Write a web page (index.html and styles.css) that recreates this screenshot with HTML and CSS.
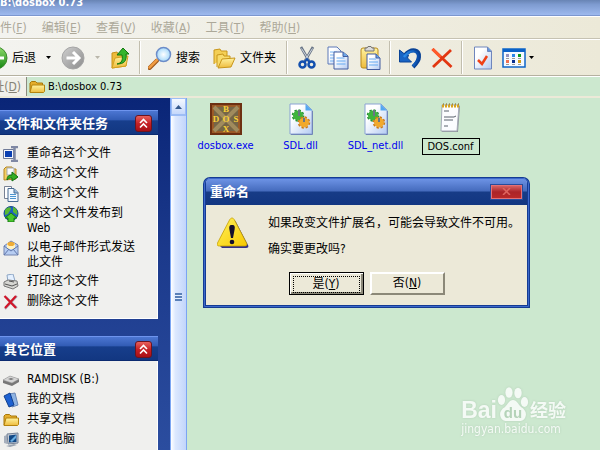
FILE: index.html
```
<!DOCTYPE html>
<html lang="zh-CN">
<head>
    <meta charset="UTF-8">
    <meta name="viewport" content="width=device-width, initial-scale=1.0">
    <title>B:\dosbox 0.73</title>
    <link rel="stylesheet" href="styles.css">
</head>
<body>
    <!-- shared symbols -->
    <svg class="defs" aria-hidden="true">
        <defs>
            <linearGradient id="gGreen" x1="0" y1="0" x2="0" y2="1"><stop offset="0" stop-color="#8fdc6c"/><stop offset="1" stop-color="#128410"/></linearGradient>
            <linearGradient id="gGrey" x1="0" y1="0" x2="1" y2="1"><stop offset="0" stop-color="#cfcfcf"/><stop offset="1" stop-color="#8c8c8c"/></linearGradient>
            <linearGradient id="gFolder" x1="0" y1="0" x2="0" y2="1"><stop offset="0" stop-color="#fff3a0"/><stop offset="1" stop-color="#eebb3c"/></linearGradient>
            <linearGradient id="gPage" x1="0" y1="0" x2="1" y2="1"><stop offset="0.3" stop-color="#fff"/><stop offset="1" stop-color="#b4cbf2"/></linearGradient>
            <linearGradient id="gWarn" x1="0" y1="0" x2="1" y2="1"><stop offset="0" stop-color="#fff25c"/><stop offset="1" stop-color="#f8c800"/></linearGradient>
            <linearGradient id="gUndo" x1="0" y1="0" x2="1" y2="0"><stop offset="0" stop-color="#2b8cea"/><stop offset="1" stop-color="#0a4ca8"/></linearGradient>
            <radialGradient id="gLens"><stop offset="0" stop-color="#fff"/><stop offset="1" stop-color="#a5d9fa"/></radialGradient>
        </defs>
        <symbol id="folder" viewBox="0 0 16 16">
            <path d="M1 13V4l1.500-1.500h4L8 4h5.500v2" fill="#e5ad2c" stroke="#a87808"/>
            <path d="M1 13.500L3 6h12.500v6.500l-1 1z" fill="url(#gFolder)" stroke="#b5830d"/>
        </symbol>
        <symbol id="chevrons" viewBox="0 0 17 17">
            <path d="M5 8l3.500-3.500L12 8M5 12.500L8.500 9l3.500 3.500" fill="none" stroke="#fff" stroke-width="1.600"/>
        </symbol>
        <symbol id="dll" viewBox="0 0 32 32">
            <path d="M5 1h16l6 6v24H5z" fill="url(#gPage)" stroke="#8ba3d4"/>
            <path d="M20.500 1l6.500 6.500h-6.500z" fill="#54a7ef"/>
            <path d="M27.500 8v23.500H6" fill="none" stroke="#7185b8"/>
            <circle cx="13" cy="12.500" r="5" fill="#3eb43c"/>
            <circle cx="13" cy="12.500" r="5.500" fill="none" stroke="#259431" stroke-width="1.500" stroke-dasharray="2.400 1.900"/>
            <circle cx="19" cy="19.500" r="5" fill="#f1a92d"/>
            <circle cx="19" cy="19.500" r="5.500" fill="none" stroke="#cd7b15" stroke-width="1.500" stroke-dasharray="2.400 1.900"/>
            <path d="M14 7v6M19 15v4" stroke="#687585" stroke-width="2"/>
        </symbol>
    </svg>

    <div class="window">
        <header class="titlebar">B:\dosbox 0.73</header>

        <nav class="menubar">
            <button class="menu-item" disabled>件(<u>F</u>)</button>
            <button class="menu-item" disabled>编辑(<u>E</u>)</button>
            <button class="menu-item" disabled>查看(<u>V</u>)</button>
            <button class="menu-item" disabled>收藏(<u>A</u>)</button>
            <button class="menu-item" disabled>工具(<u>T</u>)</button>
            <button class="menu-item" disabled>帮助(<u>H</u>)</button>
        </nav>

        <div class="toolbar">
            <div class="tool-group nav-group">
                <button class="tool">
                    <svg width="8" height="24" viewBox="15 0 8 24"><circle cx="11" cy="12" r="11" fill="url(#gGreen)" stroke="#3b8a2c"/><path d="M6 12h13" stroke="#fff" stroke-width="3"/></svg>
                    后退
                </button>
                <button class="drop" aria-label="后退历史"></button>
                <button class="tool" aria-label="前进" disabled>
                    <svg width="24" height="24" viewBox="0 0 24 24"><circle cx="12" cy="12" r="11" fill="url(#gGrey)" stroke="#a5a5a5"/><path d="M5.500 12h12M12 6l6 6-6 6" fill="none" stroke="#fff" stroke-width="3"/></svg>
                </button>
                <button class="drop" aria-label="前进历史" disabled></button>
                <button class="tool" aria-label="向上">
                    <svg width="20" height="24" viewBox="0 0 20 24"><path d="M2 22V7l5-1 1 2 8-1v13z" fill="#edba3b" stroke="#c8921a"/><path d="M2 22l3-10 13-2-2 10z" fill="url(#gFolder)" stroke="#d5a11f"/><path d="M7 18c5-1 6-4 5-9H7l6-7 6 6h-3c1 7-2 10-9 10z" fill="#35b52d" stroke="#13780f"/></svg>
                </button>
            </div>
            <div class="tool-group find-group">
                <button class="tool">
                    <svg width="24" height="24" viewBox="0 0 24 24"><path d="M1.500 22L9 14.500" stroke="#9a5418" stroke-width="4" stroke-linecap="round"/><path d="M1.500 21.500L9 14" stroke="#ef9b41" stroke-width="2.500" stroke-linecap="round"/><circle cx="15.500" cy="8.500" r="7" fill="url(#gLens)" stroke="#6c8cc8" stroke-width="1.500"/></svg>
                    搜索
                </button>
                <button class="tool">
                    <svg width="24" height="24" viewBox="0 0 24 24"><path d="M2 18V4l6-1 1 2h6v6" fill="#f4cf55" stroke="#c8961b"/><path d="M5 21V9l6-1 1 2h6v4" fill="#f8dc6b" stroke="#c8961b"/><path d="M6 22l4-9 13-1-4 9z" fill="url(#gFolder)" stroke="#c8961b"/></svg>
                    文件夹
                </button>
            </div>
            <div class="tool-group edit-group">
                <button class="tool" aria-label="剪切">
                    <svg width="20" height="24" viewBox="0 0 20 24"><path d="M4 1l8 14M16 1L8 15" stroke="#687486" stroke-width="2.600"/><path d="M4.500 2.500l7 11M15.500 2.500l-7 11" stroke="#d2d9e1" stroke-width="1"/><circle cx="5.500" cy="18.500" r="3" fill="none" stroke="#1450ae" stroke-width="2.500"/><circle cx="14.500" cy="18.500" r="3" fill="none" stroke="#1450ae" stroke-width="2.500"/><path d="M7.500 16l2.500-3 2.500 3" fill="none" stroke="#1450ae" stroke-width="2"/></svg>
                </button>
                <button class="tool" aria-label="复制">
                    <svg width="24" height="24" viewBox="0 0 24 24"><path d="M2 1h9l4 4v13H2z" fill="url(#gPage)" stroke="#5c79b8"/><path d="M4 6h7M4 9h8M4 12h8M4 15h8" stroke="#75b2f2"/><path d="M8 6h9l5 4v13H8z" fill="url(#gPage)" stroke="#435d9f"/><path d="M17 6v4.500h5" fill="#6aa7e8" stroke="#435d9f"/><path d="M10.500 12h8M10.500 15h9M10.500 18h9" stroke="#64aaf2"/></svg>
                </button>
                <button class="tool" aria-label="粘贴">
                    <svg width="24" height="24" viewBox="0 0 24 24"><rect x="2" y="2" width="17" height="20" rx="2" fill="url(#gFolder)" stroke="#b98a1b"/><path d="M6 5V2h2l1-1.500h3L13 2h2v3z" fill="#dadada" stroke="#747474"/><path d="M8 8h9l4 4v11.500H8z" fill="url(#gPage)" stroke="#435d9f"/><path d="M17 8v4h4" fill="#6aa7e8" stroke="#435d9f"/><path d="M10 13h7M10 16h9M10 19h9" stroke="#64aaf2"/></svg>
                </button>
            </div>
            <div class="tool-group undo-group">
                <button class="tool" aria-label="撤消">
                    <svg width="24" height="24" viewBox="0 0 24 24"><path d="M7 9c7-8 15-5 14 2 0 4-3 7-6 10" fill="none" stroke="#0a4396" stroke-width="4"/><path d="M1.500 4v12h12l-4-4 1-3-4-1z" fill="#1964c4" stroke="#0a4396"/><path d="M6 11c7-9 15-6 14 0 0 4-2 6-5 9" fill="none" stroke="url(#gUndo)" stroke-width="2.500"/></svg>
                </button>
                <button class="tool" aria-label="删除">
                    <svg width="24" height="24" viewBox="0 0 24 24"><path d="M2.500 3l19 18M21 4L3 21" stroke="#e23610" stroke-width="2.800"/><path d="M2.500 3l8 8" stroke="#ff5b2c" stroke-width="3"/></svg>
                </button>
            </div>
            <div class="tool-group view-group">
                <button class="tool" aria-label="属性">
                    <svg width="20" height="24" viewBox="0 0 20 24"><path d="M1.500 1h13l4 4v18h-17z" fill="url(#gPage)" stroke="#6f86bd"/><path d="M14.500 1v4.500h4" fill="#5d95dd" stroke="#6f86bd"/><path d="M5 14l4 4 5-8" fill="none" stroke="#ef4116" stroke-width="2.500"/></svg>
                </button>
                <button class="tool views" aria-label="查看">
                    <svg width="24" height="20" viewBox="0 0 24 20"><rect x="1" y="1" width="22" height="18" fill="#f5faff" stroke="#0c65c9" stroke-width="1.500"/><path d="M1 2.500h22" stroke="#0a62c8" stroke-width="3"/><path d="M4 6h3v3H4z" fill="#9292bf"/><path d="M10 6h3v3h-3z" fill="#2a86e8"/><path d="M16 6h3v3h-3z" fill="#0b9a1c"/><path d="M4 12h3v3H4z" fill="#ef7152"/><path d="M10 12h3v3h-3z" fill="#09308f"/><path d="M16 12h3v3h-3z" fill="#cf9b16"/><path d="M4 10.500h3m3 0h3m3 0h3M4 16.500h3m3 0h3m3 0h3" stroke="#999"/></svg>
                </button>
                <button class="drop" aria-label="查看方式"></button>
            </div>
        </div>

        <div class="addressbar">
            <label class="address-label" for="address">址(<u>D</u>)</label>
            <div class="address-box">
                <svg width="16" height="16"><use href="#folder"/></svg>
                <input id="address" class="address-input" type="text" value="B:\dosbox 0.73">
            </div>
        </div>

        <div class="content">
            <aside class="sidebar">
                <section class="panel">
                    <div class="panel-head">
                        <h2>文件和文件夹任务</h2>
                        <button class="collapse" aria-label="折叠文件和文件夹任务"><svg width="17" height="17"><use href="#chevrons"/></svg></button>
                    </div>
                    <ul class="panel-list">
                        <li><svg width="16" height="16" viewBox="0 0 16 16"><path d="M.5 3.500h10v9H.5z" fill="#f4f6fc" stroke="#707b98"/><path d="M2 5h7v6H2z" fill="#0b40b2"/><path d="M8 1h7M8 15h7M11.500 1v14" stroke="#7f88a4" stroke-width="2.500"/></svg><a href="#">重命名这个文件</a></li>
                        <li><svg width="16" height="16" viewBox="0 0 16 16"><path d="M1 14V3l2-2h6l1 2h3v10z" fill="#f4cf62" stroke="#b48622"/><path d="M4 2h7v7H4z" fill="#f8fafc" stroke="#a5a9b0"/><path d="M4 14c0-4 2-5 5-5V6l6 5-6 4v-3c-2 0-3 0-5 2z" fill="#36ae24" stroke="#107012"/></svg><a href="#">移动这个文件</a></li>
                        <li><svg width="16" height="16" viewBox="0 0 16 16"><path d="M1.500.5h7v12h-7z" fill="#fff" stroke="#778093"/><path d="M5 2.500h6l4 4v9H5z" fill="#f3f9ff" stroke="#486a91"/><path d="M11 3v4h4" fill="#92bce3" stroke="#486a91"/><path d="M7 8.500h6M7 10.500h6M7 12.500h6" stroke="#4c95cf"/></svg><a href="#">复制这个文件</a></li>
                        <li><svg width="16" height="16" viewBox="0 0 16 16"><circle cx="8" cy="7.500" r="7" fill="#1d61be" stroke="#164a8b"/><path d="M2 4c3-4 6-3 6-1L5 8 2 9zM10 1c4 1 5 5 4 8l-4-3z" fill="#58b833"/><path d="M8 7l6 5h-3v4H5v-4H2z" fill="#4ac82d" stroke="#187a15"/></svg><a href="#">将这个文件发布到<br>Web</a></li>
                        <li><svg width="16" height="16" viewBox="0 0 16 16"><path d="M1 6l7-5 7 4v10H1z" fill="#b7cdf2" stroke="#7384b0"/><path d="M4 3h8v6H4z" fill="#fff2c2"/><path d="M4 4c2-3 6-3 8 0l-2 2H6z" fill="#efac36"/><path d="M1 6l7 5 7-5M1 15l5-6M15 15l-5-6" fill="none" stroke="#6077ab"/></svg><a href="#">以电子邮件形式发送<br>此文件</a></li>
                        <li><svg width="16" height="16" viewBox="0 0 16 16"><path d="M4 1l6-1 2 7-7 1z" fill="#e4f0ff" stroke="#8da6c5"/><path d="M1 8l4-2 9 1 1 5-5 3-9-3z" fill="#d6d6d2" stroke="#777"/><path d="M2 10l7 2 5-2M6 7l5 1" fill="none" stroke="#555"/></svg><a href="#">打印这个文件</a></li>
                        <li><svg width="16" height="16" viewBox="0 0 16 16"><path d="M3 3l11 11M14 2L2 15" stroke="#aab" stroke-width="2"/><path d="M1.500 2l11.500 12M13 2L2 14" stroke="#d11629" stroke-width="2.200"/></svg><a href="#">删除这个文件</a></li>
                    </ul>
                </section>

                <section class="panel">
                    <div class="panel-head">
                        <h2>其它位置</h2>
                        <button class="collapse" aria-label="折叠其它位置"><svg width="17" height="17"><use href="#chevrons"/></svg></button>
                    </div>
                    <ul class="panel-list">
                        <li><svg width="16" height="16" viewBox="0 0 16 16"><path d="M0 8l7-4 9 3v3l-7 4-9-3z" fill="#777"/><path d="M0 8l7-4 9 3-7 4z" fill="#d5d5d5" stroke="#999" stroke-width=".5"/><path d="M5 7l3-1 3 1-3 1z" fill="#777"/></svg><a href="#">RAMDISK (B:)</a></li>
                        <li><svg width="16" height="16" viewBox="0 0 16 16"><path d="M6 2l6-1 3 12-6 2z" fill="#8eb3e2" stroke="#6986b5"/><path d="M1 4l6-3 4 12-5 2z" fill="#1d61d1" stroke="#12408d"/></svg><a href="#">我的文档</a></li>
                        <li><svg width="16" height="16"><use href="#folder"/></svg><a href="#">共享文档</a></li>
                        <li><svg width="16" height="16" viewBox="0 0 16 16"><path d="M1 4l3-1v9l-3-1z" fill="#a7b0bd"/><path d="M4 2l11-1v10L5 12z" fill="#c3cad4" stroke="#758296"/><path d="M6 3.500l7.500-1v7.500L6 10.500z" fill="#124986"/><path d="M7 9l6-6v3L9 10z" fill="#68aee2"/><path d="M3 14l8-2 3 1-7 2z" fill="#99a3b0"/></svg><a href="#">我的电脑</a></li>
                    </ul>
                </section>
            </aside>

            <div class="scrollbar" aria-hidden="true">
                <div class="scroll-up"><svg width="7" height="4" viewBox="0 0 7 4"><path d="M0 4l3.500-4L7 4z" fill="#35598c"/></svg></div>
                <div class="scroll-thumb"><span class="grip"></span></div>
            </div>

            <main class="files">
                <figure class="file">
                    <svg width="32" height="32" viewBox="0 0 32 32"><path d="M0 0h32v32H0z" fill="#6d3012"/><path d="M2 2h28v28H2z" fill="#9b5a28"/><path d="M4 4h24v24H4z" fill="#756647"/><path d="M4 4l24 24M28 4L4 28" stroke="#a08b5d" stroke-width="4"/><g class="dos-text"><text x="16" y="9">B</text><text x="6" y="19">D</text><text x="16" y="19">O</text><text x="26" y="19">S</text><text x="16" y="29">X</text></g></svg>
                    <figcaption>dosbox.exe</figcaption>
                </figure>
                <figure class="file">
                    <svg width="32" height="32"><use href="#dll"/></svg>
                    <figcaption>SDL.dll</figcaption>
                </figure>
                <figure class="file">
                    <svg width="32" height="32"><use href="#dll"/></svg>
                    <figcaption>SDL_net.dll</figcaption>
                </figure>
                <figure class="file">
                    <svg width="32" height="32" viewBox="0 0 32 32"><path d="M8 3h17l-2 26H7z" fill="#8d9299"/><path d="M7 2h17l-2 26H6z" fill="#fbfcff" stroke="#a5abb8"/><path d="M7 3h17" stroke="#d7a51f" stroke-width="3" stroke-dasharray="2 1"/><path d="M8 1h16" stroke="#756027" stroke-dasharray="1 2"/><path d="M9 8h5M9 14h10l2-1M9 17h9M9 23h4" fill="none" stroke="#59616c" stroke-width="1"/></svg>
                    <input class="rename" type="text" value="DOS.conf" aria-label="文件名">
                </figure>
            </main>
        </div>
    </div>

    <div class="dialog" role="dialog" aria-labelledby="dialog-title">
        <div class="dialog-title">
            <span id="dialog-title">重命名</span>
            <button class="close" aria-label="关闭" disabled><svg width="9" height="7" viewBox="0 0 9 7"><path d="M1 0l7 7M8 0L1 7" stroke="#df6660" stroke-width="1.500"/></svg></button>
        </div>
        <div class="dialog-body">
            <div class="message">
                <svg width="32" height="32" viewBox="0 0 32 32"><path d="M16.500 3c1 0 2 1 2.500 2l12 23c1 2 0 3-2 3H5l-2-2z" fill="#33308a"/><path d="M15 1c1 0 2 1 2.500 2l12 23c1 2 0 3-2 3H2.500c-2 0-3-1-2-3l12-23C13 2 14 1 15 1z" fill="url(#gWarn)" stroke="#c5a000" stroke-width=".8"/><path d="M15 8c3 0 3 2 2.500 5L16 21h-2l-1.500-8C12 10 12 8 15 8z" fill="#16102c"/><circle cx="15" cy="25" r="2.300" fill="#16102c"/></svg>
                <div class="message-text">
                    <p>如果改变文件扩展名，可能会导致文件不可用。</p>
                    <p>确实要更改吗?</p>
                </div>
            </div>
            <div class="dialog-buttons">
                <button class="btn btn-default"><span>是(<u>Y</u>)</span></button>
                <button class="btn"><span>否(<u>N</u>)</span></button>
            </div>
        </div>
    </div>

    <div class="watermark">
        <div class="brand">
            <span class="brand-bai">Bai</span>
            <svg width="32" height="36" viewBox="0 0 32 36"><g fill="#f4faf5"><ellipse cx="4.500" cy="14" rx="3.600" ry="5"/><ellipse cx="12" cy="6.500" rx="3.600" ry="5.200"/><ellipse cx="21" cy="7" rx="3.700" ry="5.200"/><ellipse cx="27.500" cy="16" rx="3.600" ry="5"/><path d="M16 14c4 0 5 4 8 7 5 3 6 7 4 11-2 4-6 3-12 3s-10 1-12-3c-2-4-1-8 4-11 3-3 4-7 8-7z"/></g><text class="brand-du" x="16" y="32">du</text></svg>
            <span class="brand-name">经验</span>
        </div>
        <div class="brand-url">jingyan.baidu.com</div>
    </div>
</body>
</html>
```

FILE: styles.css
```
* {
    box-sizing: border-box;
}

body {
    margin: 0;
    height: 100vh;
    overflow: hidden;
    position: relative;
    font-family: "DejaVu Sans Condensed", "Noto Sans CJK SC", sans-serif;
    font-size: 12px;
    line-height: 16px;
    color: #000;
    background: #cce8cf;
}

button {
    font: inherit;
    color: inherit;
    background: none;
    border: none;
    padding: 0;
}

svg {
    display: block;
    flex-shrink: 0;
}

.defs {
    position: absolute;
    width: 0;
    height: 0;
}

.window {
    display: flex;
    flex-direction: column;
    height: 100vh;
}

.titlebar {
    display: flex;
    align-items: flex-end;
    height: 16px;
    padding-bottom: 4px;
    background: linear-gradient(#6884b4, #7e9bd0 30%, #9db9ee);
    border-bottom: 1px solid #7c97cf;
    color: #fff;
    font-weight: bold;
    font-size: 11px;
}

/* menu and toolbar */
.menubar {
    display: flex;
    align-items: center;
    gap: 15px;
    height: 23px;
    background: linear-gradient(to right, #f3f3ef, #ece9d8);
    border-bottom: 1px solid #c6c2b2;
    border-top: 1px solid #fff;
}

.menu-item {
    color: #aca899;
    white-space: nowrap;
}

.toolbar {
    display: flex;
    height: 37px;
    padding: 1px 0;
    background: linear-gradient(to right, #f3f3ef, #ece9d8);
    border-top: 1px solid #fff;
    border-bottom: 1px solid #b5b1a0;
}

.tool-group {
    display: flex;
    align-items: center;
    border-right: 1px solid #c2beae;
    box-shadow: 1px 0 #fff;
}

.tool {
    display: flex;
    align-items: center;
    gap: 4px;
    white-space: nowrap;
}

.drop {
    width: 5px;
    height: 3px;
    background: #000;
    clip-path: polygon(0 0, 100% 0, 50% 100%);
}

.drop:disabled {
    background: #b9b6aa;
}

.nav-group {
    gap: 10px;
    padding-right: 9px;
}

.find-group {
    gap: 12px;
    padding: 0 10px 0 8px;
}

.edit-group {
    gap: 9px;
    padding: 0 6px 0 10px;
}

.undo-group {
    gap: 8px;
    padding: 0 7px 0 8px;
}

.view-group {
    flex: 1;
    gap: 3px;
    padding-left: 11px;
    border: none;
    box-shadow: none;
}

.views {
    margin-left: 6px;
}

.addressbar {
    display: flex;
    align-items: center;
    height: 22px;
    background: #f1f0ea;
    border-top: 1px solid #fff;
    border-bottom: 2px solid #ece9d8;
}

.address-label {
    width: 26px;
    display: flex;
    justify-content: flex-end;
    padding-right: 5px;
    color: #858275;
    white-space: nowrap;
}

.address-box {
    flex: 1;
    display: flex;
    align-items: center;
    gap: 3px;
    align-self: stretch;
    padding: 1px 0 0 2px;
    background: #cce8cf;
    border-left: 1px solid #8c8a7e;
}

.address-input {
    flex: 1;
    font: inherit;
    font-size: 11px;
    padding: 0;
    border: none;
    background: transparent;
}

/* left pane */
.content {
    flex: 1;
    display: flex;
    min-height: 0;
}

.sidebar {
    width: 170px;
    padding: 12px 12px 0 0;
    overflow: hidden;
    background: linear-gradient(#0a2577, #1c3a8c 45%, #2b4d9f);
}

.panel {
    margin-bottom: 17px;
}

.panel-head {
    display: flex;
    align-items: center;
    justify-content: space-between;
    height: 25px;
    padding: 2px 6px 0 4px;
    border-top: 1px solid #6e94ee;
    border-bottom: 1px solid #0b2a70;
    background: linear-gradient(#4c76d2, #315bb4 40%, #173e8c 42%, #123781);
}

.panel-head h2 {
    margin: 0;
    font-size: 13px;
    color: #fff;
}

.collapse {
    border-radius: 3px;
    border: 1px solid #6b1420;
    width: 17px;
    height: 17px;
    display: flex;
    align-items: center;
    justify-content: center;
    background: linear-gradient(#e8605c, #c52126 50%, #a80f16);
}

.panel-list {
    display: flex;
    flex-direction: column;
    gap: 4px;
    margin: 0;
    padding: 11px 0 8px 3px;
    list-style: none;
    background: #f0f0ee;
    border: solid #fff;
    border-width: 0 1px 1px 0;
}

.panel-list li {
    display: flex;
    gap: 8px;
    min-height: 16px;
    line-height: 15px;
}

.panel-list a {
    color: #000;
    text-decoration: none;
}

.scrollbar {
    display: flex;
    flex-direction: column;
    width: 17px;
    border: solid #7ba5f2;
    border-width: 0 1px;
    background: #e9f1fe;
}

.scroll-up {
    display: flex;
    align-items: center;
    justify-content: center;
    height: 17px;
    border: 1px solid #9dbdf5;
    background: linear-gradient(#f5f9ff, #c5d8fb);
}

.scroll-thumb {
    flex: 1;
    display: flex;
    justify-content: center;
    padding-top: 177px;
    background: linear-gradient(to right, #fff, #dce8fe 30%, #c2d5fb);
    border-top: 1px solid #9dbdf5;
}

.grip {
    width: 7px;
    height: 8px;
    background: repeating-linear-gradient(#5a80b8 0 2px, #e5f0ff 2px 3px);
}

/* file icons */
.files {
    flex: 1;
    display: flex;
    align-items: flex-start;
    padding: 5px 0 0 1px;
}

.file {
    display: flex;
    flex-direction: column;
    align-items: center;
    gap: 3px;
    width: 75px;
    margin: 0;
    font-size: 11px;
    color: #0000f0;
}

.rename {
    width: 58px;
    height: 17px;
    padding: 0;
    border: 1px solid #000;
    background: transparent;
    font: inherit;
    color: #000;
    text-align: center;
}

.dos-text {
    font: bold 9px "Liberation Serif", serif;
    fill: #f8cf36;
    text-anchor: middle;
}

/* rename dialog */
.dialog {
    position: absolute;
    left: 203px;
    top: 177px;
    width: 327px;
    border: 3px solid #153b93;
    border-top-width: 1px;
    border-radius: 7px 7px 0 0;
    background: #ece9d8;
    outline: 1px solid #3c69cb;
    outline-offset: -2px;
}

.dialog-title {
    display: flex;
    align-items: center;
    justify-content: space-between;
    height: 27px;
    padding: 0 5px 0 4px;
    border-radius: 5px 5px 0 0;
    background: linear-gradient(#7096e8, #456bbd 48%, #173c87 52%, #123681);
    color: #fff;
    font-weight: bold;
    font-size: 13px;
}

.close {
    display: flex;
    align-items: center;
    justify-content: center;
    width: 31px;
    height: 14px;
    border: 1px solid #e37075;
    outline: 1px solid #284b9a;
    background: linear-gradient(#d46062, #ab2428 50%, #b92929);
}

.dialog-body {
    padding: 10px 11px;
}

.message {
    display: flex;
    gap: 19px;
    align-items: flex-start;
    min-height: 57px;
}

.message > svg {
    margin-top: 2px;
}

.message-text {
    white-space: nowrap;
}

.message-text p {
    margin: 0 0 10px;
}

.dialog-buttons {
    display: flex;
    justify-content: center;
    gap: 6px;
}

.btn {
    width: 75px;
    height: 23px;
    padding: 2px;
    background: #ece9d8;
    border: 2px solid;
    border-color: #fff #8b8878 #8b8878 #fff;
}

.btn span {
    display: block;
    line-height: 15px;
}

.btn-default {
    border: 1px solid #000;
    box-shadow: inset 1px 1px #fff, inset -2px -2px #8b8878;
}

.btn-default span {
    margin: 1px;
    border: 1px dotted #000;
}

/* site mark */
.watermark {
    position: absolute;
    right: 34px;
    bottom: 14px;
    color: #f4faf5;
    filter: drop-shadow(0 0 1px #b4cfb8);
    font-family: "Liberation Sans", "Noto Sans CJK SC", sans-serif;
}

.brand {
    display: flex;
    align-items: flex-end;
    height: 36px;
}

.brand-bai {
    font-size: 23px;
    font-weight: bold;
    line-height: 24px;
}

.brand-du {
    font-size: 15px;
    font-weight: bold;
    fill: #b5d3b9;
    text-anchor: middle;
}

.brand-name {
    font-size: 18px;
    font-weight: bold;
    line-height: 22px;
    margin-left: 1px;
}

.brand-url {
    font-family: "DejaVu Sans Condensed", sans-serif;
    font-size: 12px;
    line-height: 14px;
}
```
